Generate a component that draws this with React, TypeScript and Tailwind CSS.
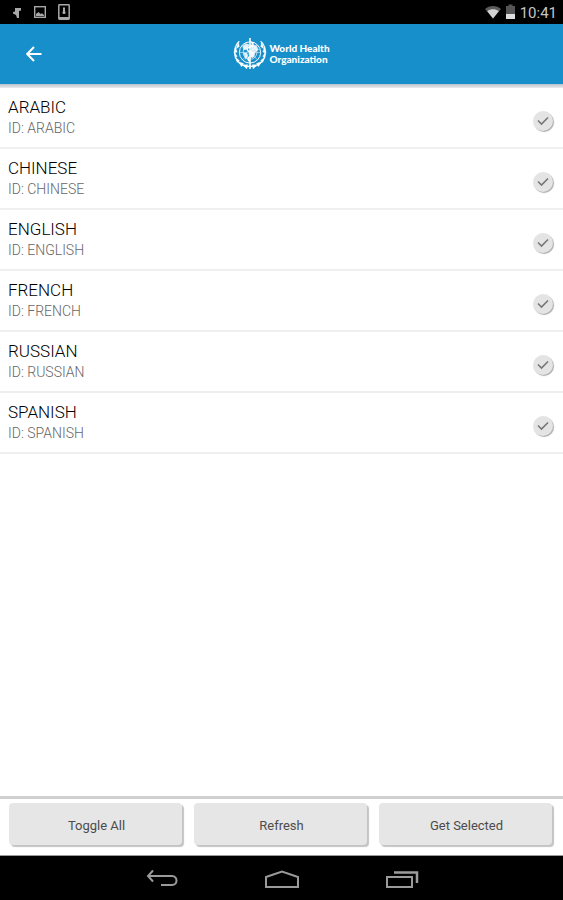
import { useState } from "react";

const languages = ["ARABIC", "CHINESE", "ENGLISH", "FRENCH", "RUSSIAN", "SPANISH"];

function StatusBar() {
  return (
    <div className="flex h-6 items-center justify-between bg-black pr-1.5 pl-3">
      <div className="flex items-center gap-3 text-[#a8a8a8]">
        <svg width="10" height="16" viewBox="0 0 10 16" fill="currentColor" aria-hidden="true">
          <path d="M3 4 9 4 9 6.500 7 7 7 14 5 14 4 11 1 9.500 1 8 3 7.500Z" />
        </svg>
        <svg width="12" height="16" viewBox="0 0 12 16" aria-hidden="true">
          <rect x="0.700" y="2.700" width="10.600" height="10.600" fill="none" stroke="currentColor" strokeWidth="1.400" />
          <path d="M2 12V10L4.500 8 6.500 10 8 9.200 10 11V12Z" fill="currentColor" />
        </svg>
        <svg width="12" height="16" viewBox="0 0 12 16" fill="none" stroke="currentColor" aria-hidden="true">
          <rect x="0.800" y="0.800" width="10.400" height="14.400" rx="0.600" strokeWidth="1.500" />
          <path d="M1 14H11" strokeWidth="2" />
          <path d="M6 3.500V10M4.500 8.500H7.500" strokeWidth="2" />
        </svg>
      </div>
      <div className="flex items-center gap-1">
        <svg width="16" height="14" viewBox="0 0 16 14" aria-hidden="true">
          <path d="M0 4C4.500 0 11.500 0 16 4L8 13.500Z" fill="#5c5c5c" />
          <path d="M2.300 6.300C5.500 3.700 10.500 3.700 13.700 6.300L8 13.500Z" fill="#d2d2d2" />
        </svg>
        <svg width="11" height="16" viewBox="0 0 11 16" aria-hidden="true">
          <path d="M3.500 0.500H7.500V2H10V15H1V2H3.500Z" fill="#555" />
          <path d="M1 10H10V15H1Z" fill="#dedede" />
        </svg>
        <span className="pt-0.5 text-[15px] leading-5 text-[#c6c6c6]">10:41</span>
      </div>
    </div>
  );
}

function Emblem() {
  return (
    <svg width="34" height="34" viewBox="0 0 32 32" fill="none" stroke="white" aria-hidden="true">
      <circle cx="16" cy="14.500" r="10" strokeWidth="0.900" />
      <circle cx="16" cy="14.500" r="6.500" strokeWidth="0.600" />
      <path d="M6 14.500H26M9 7.500 23 21.500M23 7.500 9 21.500" strokeWidth="0.500" />
      <path
        d="M9 9 12 6 15 7 14 10 12 12 10 12ZM17 7 22 8 24 12 21 14 20 18 18 20 16 16 17 12ZM10 15 13 15 14 18 12 21Z"
        fill="white"
        fillOpacity="0.850"
        strokeWidth="0.300"
      />
      <path d="M16 1V30" strokeWidth="1.500" />
      <path d="M17 5C20 6 19 9 16 9.500 12 10.500 13 13.500 16 14 20 15 19 18 16 18.500 13 19.500 14 22 16 23" strokeWidth="1.400" />
      <path d="M6 4C0 9 0 21 8 26 11 28 14 28 16 27 18 28 21 28 24 26 32 21 32 9 26 4" strokeWidth="1" />
      <path
        d="M5 5 6 9 3 11ZM2 9 4 14 1 15ZM1 14 4 18 2 20ZM2 19 6 22 4 24ZM5 23 10 25 8 28ZM9 26 14 26 13 30ZM27 5 26 9 29 11ZM30 9 28 14 31 15ZM31 14 28 18 30 20ZM30 19 26 22 28 24ZM27 23 22 25 24 28ZM23 26 18 26 19 30Z"
        fill="white"
        strokeWidth="0.300"
      />
    </svg>
  );
}

function Header() {
  return (
    <header className="grid h-15 grid-cols-[1fr_auto_1fr] items-center bg-[#178fcb]">
      <button type="button" aria-label="Back" className="ml-6 flex size-5 items-center justify-center text-white">
        <svg width="16" height="16" viewBox="0 0 16 16" fill="none" stroke="currentColor" strokeWidth="2" aria-hidden="true">
          <path d="M15.500 8H1.500M8 1 1.200 8 8 15" />
        </svg>
      </button>
      <div className="flex items-center gap-0.5 text-white">
        <Emblem />
        <p className="font-[Lato,sans-serif] text-[10px] leading-[11px] font-black">
          <span className="block">World Health</span>
          <span className="block">Organization</span>
        </p>
      </div>
    </header>
  );
}

function LanguageRow({ name }: { name: string }) {
  const [checked, setChecked] = useState(true);
  return (
    <li className="border-b-2 border-[#efefef]">
      <label className="flex h-[59px] items-center justify-between pr-[9px] pl-2">
        <span className="flex flex-col">
          <span className="text-[17px] leading-5 font-light text-black">{name}</span>
          <span className="text-sm leading-[22px] font-light text-[#666]">ID: {name}</span>
        </span>
        <span className="mt-1.5 grid size-[22px] place-items-center">
          <input
            type="checkbox"
            checked={checked}
            onChange={() => setChecked(!checked)}
            className="col-start-1 row-start-1 size-5 appearance-none rounded-full bg-[#e4e4e4] shadow-[1px_1px_1px_0px_#aaa]"
          />
          {checked && (
            <svg className="pointer-events-none col-start-1 row-start-1" width="12" height="10" viewBox="0 0 12 10" fill="none" stroke="#777" strokeWidth="1.600" aria-hidden="true">
              <path d="M1 4.500 4.500 8 11 1.500" />
            </svg>
          )}
        </span>
      </label>
    </li>
  );
}

function NavigationBar() {
  return (
    <nav className="flex h-11 items-center justify-center gap-[85px] bg-black pt-0.5 text-[#9a9a9a]">
      <button type="button" aria-label="Back">
        <svg width="34" height="20" viewBox="0 0 34 20" fill="none" stroke="currentColor" strokeWidth="2" aria-hidden="true">
          <path d="M8 1.500 3 7 8 12.500M3 7H27C33 7 33 16 27 16H16" />
        </svg>
      </button>
      <button type="button" aria-label="Home">
        <svg width="36" height="20" viewBox="0 0 36 20" fill="none" stroke="currentColor" strokeWidth="2" aria-hidden="true">
          <path d="M2 18V8L18 2.500 34 8V18Z" />
        </svg>
      </button>
      <button type="button" aria-label="Recent apps">
        <svg width="34" height="20" viewBox="0 0 34 20" fill="none" stroke="currentColor" aria-hidden="true">
          <path d="M2 8H27V18H2Z" strokeWidth="2" />
          <path d="M9 3.500H32V14" strokeWidth="2.500" />
        </svg>
      </button>
    </nav>
  );
}

export default function App() {
  return (
    <div className="flex min-h-screen flex-col bg-white font-[Roboto,'Noto_Sans',sans-serif]">
      <StatusBar />
      <Header />
      <div className="h-1 bg-linear-to-b from-[#b9bfca] to-[#ececee]" />
      <main className="flex-1">
        <ul>
          {languages.map((name) => (
            <LanguageRow key={name} name={name} />
          ))}
        </ul>
      </main>
      <footer className="grid grid-cols-3 gap-3 border-t-3 border-b border-t-[#d0d0d0] border-b-[#999] pt-1 pr-[11px] pb-2.5 pl-[9px]">
        {["Toggle All", "Refresh", "Get Selected"].map((label) => (
          <button
            key={label}
            type="button"
            className="h-[42px] rounded-[4px] bg-[#e6e6e6] pt-1 pl-0.5 text-[13px] text-[#4c4c4c] shadow-[2px_2px_1px_0px_#c4c4c4]"
          >
            {label}
          </button>
        ))}
      </footer>
      <NavigationBar />
    </div>
  );
}
